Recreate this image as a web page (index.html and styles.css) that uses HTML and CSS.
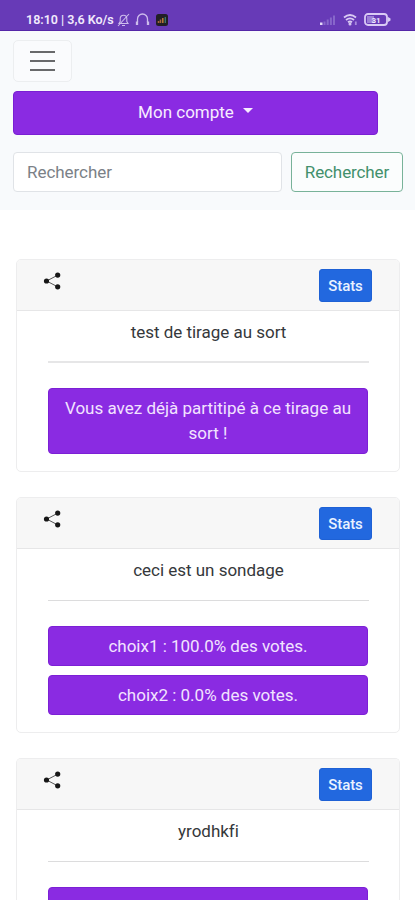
FILE: index.html
```html
<!DOCTYPE html>
<html lang="fr">
<head>
<meta charset="utf-8">
<title>Sondages</title>
<link rel="stylesheet" href="styles.css">
</head>
<body>
<svg class="defs" aria-hidden="true"><symbol id="share" viewBox="0 0 18 18"><path d="M15 3 3.600 9 15 15" fill="none" stroke="#555" stroke-width="1"/><circle cx="14.700" cy="3.100" r="2.600"/><circle cx="3.500" cy="9" r="2.600"/><circle cx="14.700" cy="14.800" r="2.600"/></symbol></svg>
<div class="status">
  <span class="clock">18:10 | 3,6 Ko/s</span>
  <svg class="bell" width="13" height="14" viewBox="0 0 13 14" fill="none" stroke="#cdbcec" stroke-width="1.1"><path d="M2 10.5h9L9.800 8.500V5.500a3.300 3.300 0 0 0-6.600 0v3zM5 12.500h3M1 13 12 1"/></svg>
  <svg class="phones" width="15" height="13" viewBox="0 0 15 13" fill="none" stroke="#cdbcec" stroke-width="1.300"><path d="M2.500 9V6a5 5 0 0 1 10 0v3"/><path d="M2 8.500v3.500M13 8.500v3.500" stroke-width="2.300"/></svg>
  <svg class="app" width="12" height="12" viewBox="0 0 12 12"><rect width="12" height="12" rx="2.500" fill="#211f25"/><path d="M2.500 9V7M4.500 9V5.500" stroke="#a8643c" stroke-width="1.500"/><path d="M6.800 9V4" stroke="#bd7b3a" stroke-width="1.500"/><path d="M9.300 9V3" stroke="#3c7d68" stroke-width="1.300"/></svg>
  <svg class="signal" width="17" height="12" viewBox="0 0 17 12"><path d="M1 8.500h2.500V11H1z" fill="#e5daf8"/><path d="M4.500 7.500h2V11h-2zM7.700 5.500h2V11h-2zM10.900 3.500h2V11h-2zM14 1.500h2V11h-2z" fill="#8767ca"/></svg>
  <svg class="wifi" width="15" height="13" viewBox="0 0 15 13" fill="none" stroke="#d9caf3" stroke-width="1.800"><path d="M1 4.500q6-5 12 0M3 7q4-3.300 8 0M5 9.300q2-1.600 4 0"/><circle cx="7" cy="11" r=".6"/><path d="M12.800 8.500v3.500" stroke="#a88bdd"/></svg>
  <svg class="battery" width="27" height="13" viewBox="0 0 27 13"><rect x="1" y="1" width="22" height="11" rx="3" fill="none" stroke="#dacbf5" stroke-width="1.800"/><path d="M24 4v5l2.500-1.500v-2z" fill="#dacbf5"/><rect x="3" y="3" width="7" height="7" fill="#9c7fd6"/><text x="12" y="9.500" text-anchor="middle">31</text></svg>
</div>
<header class="nav">
  <button class="toggler" aria-label="Menu"><i></i><i></i><i></i></button>
  <button class="account">Mon compte <span class="caret"></span></button>
  <form class="search"><input type="text" placeholder="Rechercher"><button type="button">Rechercher</button></form>
</header>
<main>
  <section class="card one">
    <div class="head"><svg class="share"><use href="#share"/></svg><button class="stats">Stats</button></div>
    <div class="body"><p>test de tirage au sort</p><hr class="thick"><button class="vote tall">Vous avez déjà partitipé à ce tirage au sort !</button></div>
  </section>
  <section class="card two">
    <div class="head"><svg class="share"><use href="#share"/></svg><button class="stats">Stats</button></div>
    <div class="body"><p>ceci est un sondage</p><hr><button class="vote">choix1 : 100.0% des votes.</button><button class="vote">choix2 : 0.0% des votes.</button></div>
  </section>
  <section class="card three">
    <div class="head"><svg class="share"><use href="#share"/></svg><button class="stats">Stats</button></div>
    <div class="body"><p>yrodhkfi</p><hr><button class="vote"></button></div>
  </section>
</main>
</body>
</html>
```
FILE: styles.css
```css
* { box-sizing: border-box; }
body { display: flex; flex-direction: column; height: 900px; margin: 0; overflow: hidden; background: #fff; color: #35383b; font: 17px/25px Roboto, sans-serif; }
button, input { font: inherit; margin: 0; }
svg { display: block; flex: none; }
.defs { position: absolute; width: 0; height: 0; }

.status { flex: none; height: 31px; padding: 9px 24px 0 26px; display: flex; align-items: center; background: #673ab7; border-bottom: 1px solid #5526a8; color: #f1eafc; }
.clock { width: 89px; font-size: 12.5px; line-height: 20px; font-weight: 600; white-space: nowrap; letter-spacing: 0; }
.bell { margin-left: 2px; }
.phones { margin-left: 5px; }
.app { margin-left: 6px; }
.signal { margin-left: auto; }
.wifi { margin-left: 7px; }
.battery { margin-left: 6px; }
.battery text { font: 700 8px Roboto, sans-serif; fill: #f0e8ff; }

.nav { flex: none; height: 179px; padding: 9px 12px 0 13px; background: #f8fafc; }
.toggler { display: flex; flex-direction: column; align-items: center; justify-content: center; gap: 7px; width: 59px; height: 42px; padding: 0; border: 1px solid #eceef0; border-radius: 5px; background: #fafbfd; }
.toggler i { width: 25px; height: 2px; background: #68696b; }
.account { display: flex; align-items: center; justify-content: center; width: 365px; height: 44px; margin-top: 9px; padding: 0 0 1px; border: 1px solid #7a1fd3; border-radius: 4px; background: #8a2be2; color: #f7edff; letter-spacing: 0; }
.caret { margin: -4px 0 0 9px; border: 5px solid transparent; border-top-color: #f7edff; border-bottom: 0; }
.search { display: flex; gap: 9px; margin-top: 17px; }
.search input { width: 269px; height: 40px; padding: 0 13px; border: 1px solid #e0e3e7; border-radius: 4px; background: #fff; outline: 0; letter-spacing: -.05px; }
.search input::placeholder { color: #7b8187; opacity: 1; }
.search button { width: 112px; height: 40px; padding: 0; border: 1px solid #78b299; border-radius: 4px; background: #fbfdfd; color: #42906c; letter-spacing: -.1px; }

main { flex: 1; min-height: 0; overflow: hidden; padding: 49px 15px 0 16px; }
.card { border: 1px solid #ededee; border-radius: 5px; background: #fff; overflow: hidden; }
.one { height: 213px; }
.two { height: 236px; margin-top: 25px; }
.three { height: 142px; margin-top: 25px; border-bottom: 0; border-radius: 5px 5px 0 0; }
.head { display: flex; justify-content: space-between; height: 51px; padding: 9px 27px 0 26px; border-bottom: 1px solid #e6e6e7; background: #f7f7f7; }
.share { width: 18px; height: 18px; margin-top: 3px; fill: #171717; }
.stats { width: 53px; height: 33px; padding: 0; border: 1px solid #1e61d5; border-radius: 3px; background: #2268df; color: #e9f2ff; font-size: 15px; line-height: 22px; font-weight: 500; letter-spacing: -.1px; }
.body { padding: 9px 30px 0 31px; text-align: center; }
.body p { margin: 0; letter-spacing: -.02px; }
.body hr { height: 1px; margin: 17px 0 25px; border: 0; background: #dcdcdd; }
.body hr.thick { height: 2px; margin: 16px 0 25px; background: #e6e6e7; }
.vote { display: block; width: 320px; height: 40px; margin: 0 0 9px; padding: 6px 14px; border: 1px solid #7c20d5; border-radius: 4px; background: #8a2be2; color: #f2e3ff; }
.vote.tall { height: 66px; margin-top: 1px; }
```
